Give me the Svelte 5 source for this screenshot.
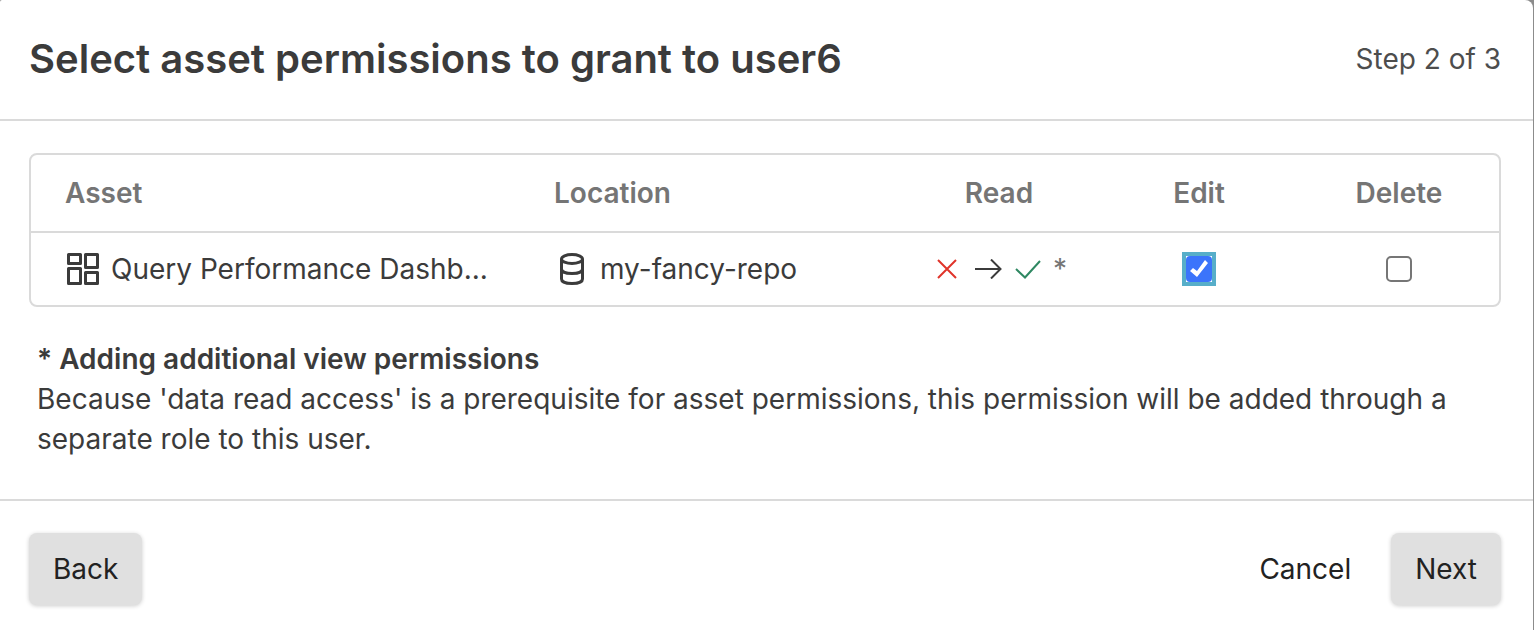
<script>
    import { onMount } from 'svelte'

    let asset = {
        name: 'Query Performance Dashb...',
        location: 'my-fancy-repo',
        edit: true,
        remove: false
    }
    let editBox

    onMount(() => {
        editBox.focus()
    })
</script>

<div class="dialog">
    <header>
        <h1>Select asset permissions to grant to user6</h1>
        <span class="step">Step 2 of 3</span>
    </header>

    <main>
        <div class="tableBox">
            <table>
                <colgroup>
                    <col />
                    <col class="locationCol" />
                    <col class="permCol" />
                    <col class="permCol" />
                    <col class="permCol" />
                </colgroup>
                <thead>
                    <tr>
                        <th>Asset</th>
                        <th>Location</th>
                        <th class="center">Read</th>
                        <th class="center">Edit</th>
                        <th class="center">Delete</th>
                    </tr>
                </thead>
                <tbody>
                    <tr>
                        <td>
                            <div class="cell">
                                <svg width="34" height="34" viewBox="0 0 34 34" fill="none" stroke="#3b3b3b" stroke-width="3" stroke-linejoin="round">
                                    <rect x="3.5" y="2.5" width="12" height="9" />
                                    <rect x="20.5" y="2.5" width="12" height="13" />
                                    <rect x="3.5" y="16.5" width="12" height="15" />
                                    <rect x="20.5" y="20.5" width="12" height="11" />
                                </svg>
                                <span class="name">{asset.name}</span>
                            </div>
                        </td>
                        <td>
                            <div class="cell">
                                <svg width="34" height="34" viewBox="0 0 34 34" fill="none" stroke="#3b3b3b" stroke-width="3">
                                    <ellipse cx="18" cy="7" rx="10.5" ry="4.5" />
                                    <path d="M7.5 7v20c0 3 5 4.5 10.5 4.5s10.5-1.5 10.5-4.5V7M7.5 17c0 3 5 4.5 10.5 4.5s10.5-1.5 10.5-4.5" />
                                </svg>
                                <span class="name">{asset.location}</span>
                            </div>
                        </td>
                        <td class="center">
                            <div class="read">
                                <svg width="26" height="20" viewBox="0 0 26 20" fill="none" stroke="#e0342a" stroke-width="2"><path d="M1 1l18 18M19 1L1 19" /></svg>
                                <svg width="28" height="20" viewBox="0 0 28 20" fill="none" stroke="#3b3b3b" stroke-width="2"><path d="M0 10h26M16 .5l9.5 9.5-9.5 9.5" /></svg>
                                <svg width="26" height="20" viewBox="0 0 26 20" fill="none" stroke="#2f8862" stroke-width="2"><path d="M1 10l9 8.5L25 2" /></svg>
                                <span>*</span>
                            </div>
                        </td>
                        <td class="center"><input type="checkbox" aria-label="Edit" bind:this={editBox} bind:checked={asset.edit} /></td>
                        <td class="center"><input type="checkbox" aria-label="Delete" bind:checked={asset.remove} /></td>
                    </tr>
                </tbody>
            </table>
        </div>
        <div class="note">
            <strong>* Adding additional view permissions</strong>
            <p>Because 'data read access' is a prerequisite for asset permissions, this permission will be added through a separate role to this user.</p>
        </div>
    </main>

    <footer>
        <button class="filled">Back</button>
        <div class="right">
            <button>Cancel</button>
            <button class="filled">Next</button>
        </div>
    </footer>
</div>

<style>
    :global(body){
        background: #8c8c8c;
    }
    .dialog{
        box-sizing: border-box;
        min-height: 100vh;
        margin-right: 1px;
        font-family: Inter, "Liberation Sans", sans-serif;
        font-size: 28px;
        line-height: 40px;
        color: #3b3b3b;
        background: white;
        border-radius: 2px 8px 0 0;
    }
    header{
        display: flex;
        align-items: center;
        justify-content: space-between;
        padding: 31px 32px 33px 29px;
        border-bottom: 2px solid #dadada;
    }
    h1{
        margin: 0;
        font-size: 40px;
        line-height: 55px;
        font-weight: 600;
    }
    .step{
        color: #4d4d4d;
    }
    main{
        padding: 32px 32px 40px 29px;
    }
    .tableBox{
        border: 2px solid #dadada;
        border-radius: 8px;
    }
    table{
        width: 100%;
        table-layout: fixed;
        border-collapse: collapse;
    }
    .permCol{
        width: 200px;
    }
    .locationCol{
        width: 379px;
    }
    th, td{
        padding: 0 0 0 34px;
        height: 72px;
        text-align: left;
    }
    th{
        height: 76px;
        font-weight: 600;
        color: #757575;
        border-bottom: 2px solid #dadada;
    }
    .center{
        padding: 0;
        text-align: center;
    }
    .cell{
        display: flex;
        align-items: center;
        gap: 12px;
    }
    .cell svg{
        flex: none;
    }
    .name{
        overflow: hidden;
        text-overflow: ellipsis;
        white-space: nowrap;
    }
    .read{
        display: flex;
        align-items: center;
        justify-content: center;
        gap: 12px;
        padding-left: 6px;
        color: #757575;
    }
    input{
        appearance: none;
        display: block;
        position: relative;
        box-sizing: border-box;
        width: 26px;
        height: 26px;
        margin: 0 auto;
        border: 2px solid #767676;
        border-radius: 5px;
        background: white;
    }
    input:checked{
        border: none;
        border-radius: 0;
    }
    input:checked::before, input:checked::after{
        content: "";
        position: absolute;
        inset: 0;
    }
    input:checked::before{
        border-radius: 4px;
        background: #3b74fb;
    }
    input:checked::after{
        background: white;
        clip-path: polygon(4px 15px, 7px 12px, 11px 15px, 19px 4px, 22px 7px, 11px 21px);
    }
    input:focus{
        outline: 4px solid #57aec9;
        outline-offset: 0;
    }
    .note{
        padding: 32px 8px 0;
    }
    .note p{
        margin: 0;
    }
    .note strong{
        display: block;
        font-weight: 600;
    }
    footer{
        display: flex;
        justify-content: space-between;
        padding: 32px 32px 24px 29px;
        border-top: 2px solid #dadada;
    }
    .right{
        display: flex;
        gap: 16px;
    }
    button{
        font: inherit;
        line-height: 40px;
        color: #222;
        padding: 16px 24px;
        border: none;
        border-radius: 8px;
        background: transparent;
        cursor: pointer;
    }
    .filled{
        background: #e0e0e0;
        box-shadow: 0 1px 4px rgba(0, 0, 0, 0.2);
    }
</style>
